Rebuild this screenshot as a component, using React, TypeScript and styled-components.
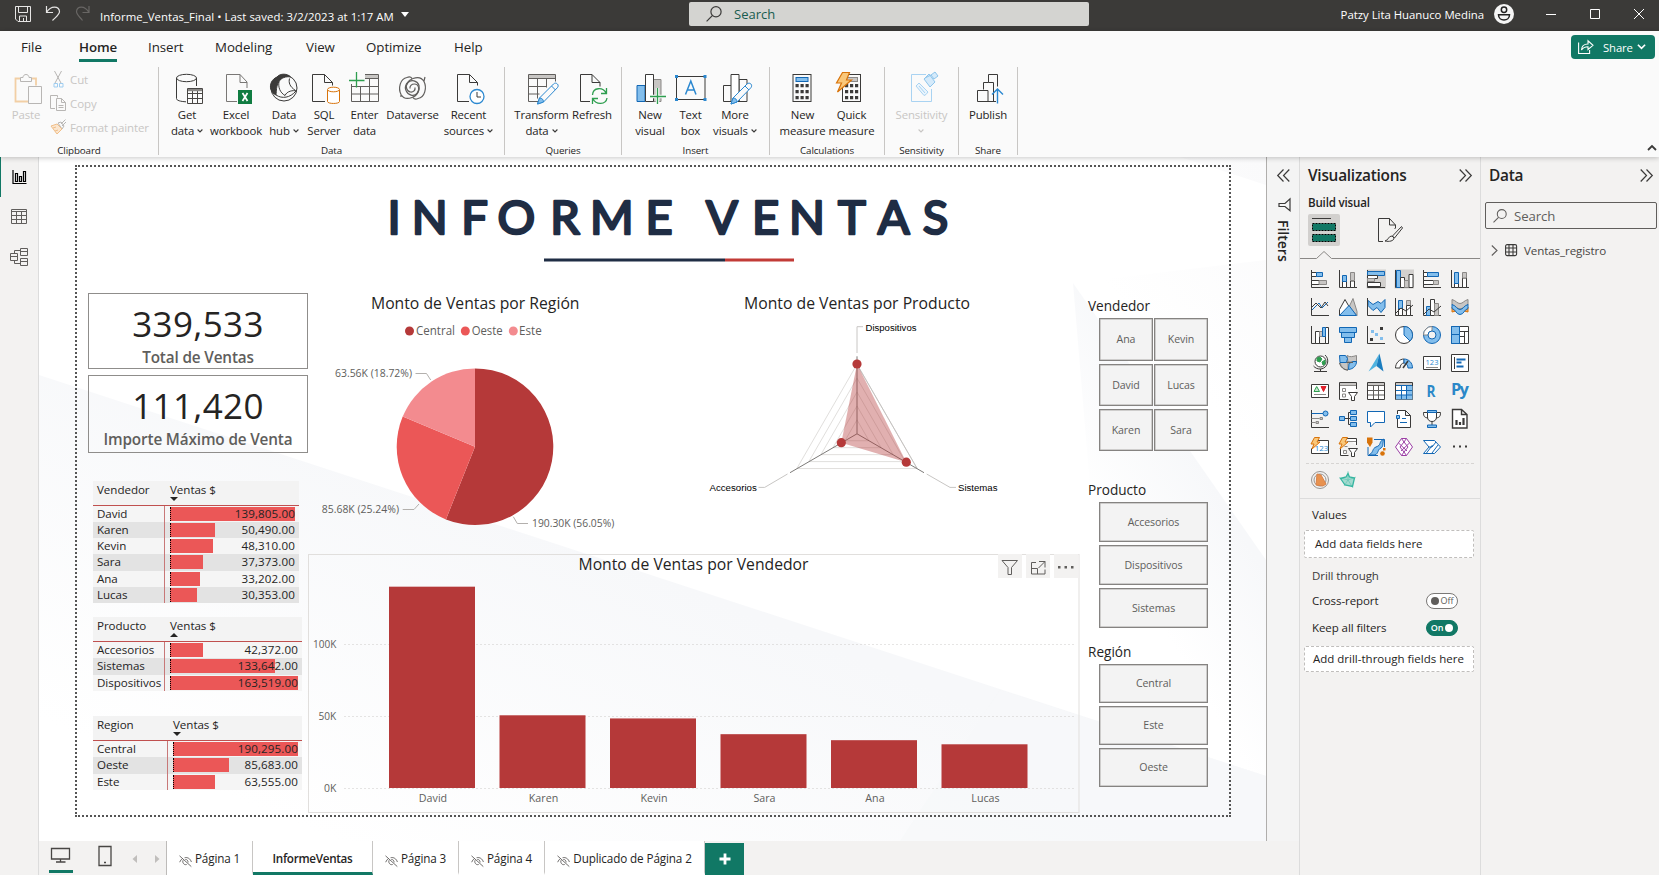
import React from "react";
import styled, { createGlobalStyle } from "styled-components";

const ui = `"Open Sans", "Noto Sans", sans-serif`;
const INK = "#3b3a39";
const GREEN = "#117865";
const BLUE = "#1267b4";
const SKY = "#83beec";
const GREY = "#8a8886";
const SILVER = "#c8c6c4";
const ORANGE = "#d8730a";
const CRIMSON = "#b53939";
const RED = "#eb5757";
const PINK = "#f38b8f";

const Global = createGlobalStyle`
  * { box-sizing: border-box; }
  body { margin: 0; background: #f3f2f1; font-family: ${ui}; color: #252423; }
  svg { display: block; overflow: visible; flex: none; }
  svg text { font-family: ${ui}; }
`;

/* ---------- shell ---------- */
const Shell = styled.div`
  width: 1659px;
  height: 875px;
  display: flex;
  flex-direction: column;
  overflow: hidden;
  white-space: nowrap;
`;
const TitleBar = styled.header`
  height: 31px;
  flex: none;
  display: flex;
  background: #3b3a38;
  color: #fff;
  font-size: 11.4px;
`;
const TitleLeft = styled.div`
  width: 689px;
  display: flex;
  align-items: center;
  padding: 2px 0 0 15px;
`;
const FileName = styled.span`
  margin-left: 10px;
  letter-spacing: 0.04px;
`;
const TopSearch = styled.div`
  width: 400px;
  height: 24px;
  margin-top: 2px;
  padding-left: 17px;
  border-radius: 2px;
  background: #d4d4d1;
  color: #185c4f;
  display: flex;
  align-items: center;
  gap: 12px;
  font-size: 13px;
`;
const TitleRight = styled.div`
  flex: 1;
  display: flex;
  align-items: center;
  justify-content: flex-end;
  padding: 0 15px 3px 0;
`;
const UserName = styled.span`
  margin-right: 10px;
  letter-spacing: -0.03px;
`;

/* ---------- ribbon ---------- */
const Ribbon = styled.div`
  height: 126px;
  flex: none;
  background: #fafafa;
  box-shadow: 0 1px 5px rgba(0, 0, 0, 0.22);
  position: relative;
  z-index: 2;
`;
const TabRow = styled.nav`
  height: 36px;
  display: flex;
  align-items: flex-start;
  padding-left: 21px;
`;
const RibbonTab = styled.span<{ $w: number; $active?: boolean }>`
  width: ${(p) => p.$w}px;
  font-size: 13.3px;
  line-height: 18px;
  padding-top: 7px;
  letter-spacing: -0.05px;
  font-weight: ${(p) => (p.$active ? 600 : 400)};
`;
const TabMark = styled.span<{ $active?: boolean }>`
  display: inline-block;
  padding-bottom: 3px;
  letter-spacing: ${(p) => (p.$active ? "-0.1px" : "inherit")};
  border-bottom: 3px solid ${(p) => (p.$active ? GREEN : "transparent")};
`;
const ShareButton = styled.button`
  width: 84px;
  height: 24px;
  margin: 4px 4px 0 auto;
  padding: 0 8px 0 7px;
  border: 0;
  border-radius: 4px;
  background: ${GREEN};
  color: #fff;
  display: flex;
  align-items: center;
  font: 500 11.3px ${ui};
  letter-spacing: -0.1px;
`;
const ShareText = styled.span`
  margin: 0 4px 0 9px;
`;
const Tools = styled.div`
  display: flex;
  height: 90px;
`;
const Group = styled.section<{ $w: number; $pad?: number }>`
  width: ${(p) => p.$w}px;
  height: 88px;
  padding-left: ${(p) => p.$pad ?? 0}px;
  border-right: 1px solid #c8c6c4;
  display: grid;
  grid-template-rows: 76px 12px;
`;
const GroupName = styled.span<{ $pad: number }>`
  margin-left: ${(p) => -p.$pad}px;
  text-align: center;
  font-size: 9.8px;
  line-height: 16px;
  letter-spacing: -0.1px;
`;
const ToolRow = styled.div`
  display: flex;
`;
const Tool = styled.div<{ $w: number; $muted?: boolean; $heavy?: boolean }>`
  width: ${(p) => p.$w}px;
  padding-top: 5px;
  display: flex;
  flex-direction: column;
  align-items: center;
  font-size: 11.4px;
  line-height: 16px;
  letter-spacing: -0.12px;
  font-weight: ${(p) => (p.$heavy ? 500 : 400)};
  color: ${(p) => (p.$muted ? "#c8c6c4" : "#252423")};
`;
const ToolLabel = styled.span`
  margin-top: 2px;
  display: flex;
  flex-direction: column;
  align-items: center;
`;
const WithChevron = styled.span`
  display: flex;
  align-items: center;
  gap: 3px;
  height: 16px;
`;
const ClipList = styled.div`
  display: flex;
  flex-direction: column;
  margin-left: 7px;
`;
const ClipItem = styled.div`
  height: 24px;
  display: flex;
  align-items: center;
  gap: 3px;
  font-size: 11.5px;
  letter-spacing: -0.1px;
  color: #c8c6c4;
`;
const RibbonFold = styled.div`
  margin: 77px 2px 0 auto;
`;

/* ---------- work area ---------- */
const Work = styled.main`
  flex: 1;
  display: flex;
  min-height: 0;
`;
const Rail = styled.aside`
  width: 39px;
  background: #f3f2f1;
  border-right: 1px solid #dcdcdc;
`;
const RailItem = styled.div<{ $active?: boolean }>`
  height: 40px;
  display: flex;
  align-items: center;
  padding-left: 9px;
  border-left: 1px solid ${(p) => (p.$active ? GREEN : "transparent")};
`;
const Center = styled.div`
  width: 1261px;
  display: flex;
  flex-direction: column;
  border-right: 1px solid #dcdcdc;
`;
const CanvasRow = styled.div`
  height: 684px;
  display: flex;
`;
const Canvas = styled.div`
  width: 1228px;
  height: 684px;
  padding: 8px 0 0 36px;
  background: #fff;
  border-right: 1px solid #b0aeac;
  position: relative;
  overflow: hidden;
`;
const Backdrop = styled.svg`
  position: absolute;
  left: 0;
  top: 0;
`;
const FilterPane = styled.aside`
  flex: 1;
  background: #f4f4f4;
  display: flex;
  flex-direction: column;
  align-items: center;
  padding-top: 12px;
`;
const FilterText = styled.span`
  writing-mode: vertical-rl;
  margin-top: 8px;
  font-size: 14px;
  line-height: 18px;
  font-weight: 600;
`;

/* ---------- report page ---------- */
const Page = styled.div`
  position: relative;
  width: 1156px;
  height: 652px;
  border: 2px dotted #555;
  display: grid;
  grid-template-rows: 114px 1fr;
`;
const PageHead = styled.div`
  padding-left: 301px;
`;
const PageBody = styled.div`
  display: grid;
  grid-template-columns: 231px 772px 149px;
`;
const LeftCol = styled.div`
  padding: 12px 0 0 11px;
`;
const MidCol = styled.div``;
const Pair = styled.div`
  display: flex;
  height: 273px;
`;
const RightCol = styled.div`
  padding: 16px 0 0 8px;
`;
const Kpi = styled.div<{ $h: number }>`
  width: 220px;
  height: ${(p) => p.$h}px;
  margin-bottom: 6px;
  border: 1px solid #8f8d8b;
  border-bottom-width: 1.5px;
  display: flex;
  flex-direction: column;
  align-items: center;
`;
const KpiValue = styled.span`
  font-size: 35px;
  line-height: 40px;
  margin-top: 10px;
  height: 43px;
  letter-spacing: 0.35px;
`;
const KpiName = styled.span`
  font-size: 15.3px;
  line-height: 20px;
  height: 20px;
  font-weight: 600;
  color: #605e5c;
  letter-spacing: -0.15px;
`;
const TableBox = styled.div<{ $w: number; $top: number }>`
  width: ${(p) => p.$w}px;
  margin: ${(p) => p.$top}px 0 0 5px;
  font-size: 11.6px;
  letter-spacing: -0.05px;
`;
const HeadRow = styled.div<{ $split: number }>`
  height: 25px;
  display: grid;
  grid-template-columns: ${(p) => p.$split}px 1fr;
  background: #f3f3f3;
  border-bottom: 1px solid #c0504f;
  padding-left: 4px;
  line-height: 17px;
`;
const HeadCell = styled.div``;
const SortMark = styled.i<{ $up?: boolean }>`
  display: block;
  width: 0;
  margin-top: -1px;
  border: 4px solid transparent;
  ${(p) => (p.$up ? "border-bottom-color: #252423; border-top: 0;" : "border-top-color: #252423; border-bottom: 0;")}
`;
const BodyRow = styled.div<{ $split: number; $odd: boolean }>`
  height: 16.15px;
  display: grid;
  grid-template-columns: ${(p) => p.$split}px 1fr;
  background: ${(p) => (p.$odd ? "#e3e3e3" : "#f5f5f5")};
  line-height: 15.5px;
`;
const NameCell = styled.div`
  padding-left: 4px;
  border-right: 1px solid #c87878;
`;
const ValueCell = styled.div<{ $pr: number }>`
  padding: 1px ${(p) => p.$pr}px 1px 5px;
  display: grid;
`;
const Meter = styled.div`
  grid-area: 1 / 1;
  height: 14px;
  background: ${RED};
  border-left: 1px dotted #000;
`;
const Amount = styled.span`
  grid-area: 1 / 1;
  text-align: right;
  line-height: 13.5px;
  letter-spacing: 0.12px;
  z-index: 1;
`;
const SlicerName = styled.h3`
  margin: 0;
  font-weight: 400;
  font-size: 13.6px;
  height: 21px;
  line-height: 18px;
`;
const Slicer = styled.div<{ $cols: number; $rows: string; $after: number }>`
  width: 109px;
  margin: 0 0 ${(p) => p.$after}px 11px;
  display: grid;
  grid-template-columns: repeat(${(p) => p.$cols}, 1fr);
  grid-template-rows: ${(p) => p.$rows};
  column-gap: 1px;
  row-gap: 3px;
`;
const SlicerButton = styled.div`
  background: #f3f3f3;
  border: 1px solid #858381;
  box-shadow: inset 0 0 0 0.5px #aaa8a6;
  display: flex;
  align-items: center;
  justify-content: center;
  color: #605e5c;
  font-size: 10.6px;
  letter-spacing: -0.1px;
  padding-bottom: 1px;
`;

/* ---------- page tabs ---------- */
const Tabs = styled.footer`
  flex: 1;
  display: flex;
  background: #f3f2f1;
`;
const TabTools = styled.div`
  width: 128px;
  border-right: 1px solid #bdbbb9;
  padding-left: 10px;
`;
const PageTab = styled.div<{ $w: number; $active?: boolean }>`
  width: ${(p) => p.$w}px;
  background: #fff;
  border-right: 1px solid #c8c6c4;
  border-bottom: 3px solid ${(p) => (p.$active ? GREEN : "#fff")};
  display: flex;
  align-items: center;
  justify-content: center;
  gap: 3px;
  padding-top: 3px;
  font-size: 11.7px;
  letter-spacing: ${(p) => (p.$active ? -0.3 : -0.12)}px;
  font-weight: ${(p) => (p.$active ? 600 : 400)};
`;
const AddTab = styled.div`
  width: 39px;
  margin-top: 2px;
  background: ${GREEN};
  display: flex;
  align-items: center;
  justify-content: center;
`;

/* ---------- side panes ---------- */
const VizPane = styled.aside`
  width: 181px;
  background: #f3f2f1;
  border-right: 1px solid #dcdcdc;
`;
const DataPane = styled.aside`
  flex: 1;
  background: #f3f2f1;
`;
const PaneHead = styled.div<{ $pr: number }>`
  height: 38px;
  padding: 0 ${(p) => p.$pr}px 1px 8px;
  display: flex;
  align-items: center;
  justify-content: space-between;
  font-size: 15.4px;
  font-weight: 600;
  letter-spacing: -0.25px;
`;
const BuildText = styled.div`
  height: 19px;
  line-height: 16px;
  padding-left: 8px;
  font-size: 11.6px;
  font-weight: 600;
  letter-spacing: -0.2px;
`;
const ModeRow = styled.div`
  height: 45px;
  padding-left: 8px;
  display: flex;
  gap: 38px;
`;
const ModeBox = styled.div`
  width: 32px;
  height: 32px;
  border-radius: 2px;
  background: #d2d0ce;
`;
const IconGrid = styled.div`
  display: grid;
  grid-template-columns: repeat(6, 18px);
  grid-auto-rows: 18px;
  gap: 10px;
  margin: 11px 6px 0 6px;
  padding: 0 0 7px 5px;
  border-bottom: 1px dashed #d6d4d2;
`;
const CustomRow = styled.div`
  height: 35px;
  padding: 7px 0 0 11px;
  display: flex;
  gap: 10px;
  border-bottom: 1px solid #dcdcdc;
`;
const FieldName = styled.div<{ $h: number; $strong?: boolean }>`
  height: ${(p) => p.$h}px;
  padding: 0 22px 0 12px;
  display: flex;
  align-items: center;
  justify-content: space-between;
  font-size: 11.5px;
  letter-spacing: -0.08px;
  font-weight: ${(p) => (p.$strong ? 500 : 400)};
  color: ${(p) => (p.$strong ? "#3b3a39" : "#252423")};
`;
const DropWell = styled.div<{ $h: number; $pl: number }>`
  height: ${(p) => p.$h}px;
  width: 170px;
  margin-left: 4px;
  padding: 0 0 2px ${(p) => p.$pl}px;
  border: 1px dashed #c0bebc;
  border-radius: 2px;
  background: #fff;
  display: flex;
  align-items: center;
  font-size: 11.5px;
  letter-spacing: 0;
`;
const Toggle = styled.span<{ $on?: boolean }>`
  width: 32px;
  height: 16px;
  border-radius: 8px;
  border: 1px solid ${(p) => (p.$on ? GREEN : "#7a7876")};
  background: ${(p) => (p.$on ? GREEN : "#fff")};
  color: ${(p) => (p.$on ? "#fff" : "#605e5c")};
  display: flex;
  flex-direction: ${(p) => (p.$on ? "row" : "row-reverse")};
  align-items: center;
  justify-content: center;
  gap: 2px;
  font-size: 9px;
  font-weight: ${(p) => (p.$on ? 600 : 400)};
`;
const Knob = styled.i<{ $on?: boolean }>`
  width: 8px;
  height: 8px;
  border-radius: 50%;
  background: ${(p) => (p.$on ? "#fff" : "#605e5c")};
`;
const DataSearch = styled.div`
  width: 172px;
  height: 27px;
  margin: 7px 0 0 4px;
  padding-left: 7px;
  border: 1px solid #605e5c;
  border-radius: 2px;
  display: flex;
  align-items: center;
  gap: 7px;
  font-size: 13.2px;
  color: #605e5c;
  letter-spacing: -0.1px;
`;
const TableRow = styled.div`
  margin-top: 12px;
  height: 18px;
  padding-left: 10px;
  display: flex;
  align-items: center;
  gap: 7px;
  font-size: 11.6px;
  color: #484644;
  letter-spacing: -0.1px;
`;

/* ---------- small glyphs ---------- */
const Chev = ({ c = INK, w = 7 }: { c?: string; w?: number }) => (
  <svg width={w} height={w * 0.6} viewBox="0 0 7 4.2" fill="none" stroke={c} strokeWidth="1.3">
    <path d="M.7 .6 3.5 3.4 6.3 .6" />
  </svg>
);
const Double = ({ left }: { left?: boolean }) => (
  <svg width="13" height="13" viewBox="0 0 13 13" fill="none" stroke={INK} strokeWidth="1.2">
    <path d={left ? "M6.5.5.7 6.5l5.8 6M12.3.5 6.5 6.5l5.8 6" : "M.7.5l5.8 6-5.8 6M6.5.5l5.8 6-5.8 6"} />
  </svg>
);
const Lens = ({ s = 16, c = INK }: { s?: number; c?: string }) => (
  <svg width={s} height={s} viewBox="0 0 16 16" fill="none" stroke={c} strokeWidth="1.2">
    <circle cx="10" cy="5.8" r="5.1" />
    <path d="M6.3 9.6.6 15.4" />
  </svg>
);
const Hidden = () => (
  <svg width="13" height="12" viewBox="0 0 13 12" fill="none" stroke="#605e5c" strokeWidth=".9" style={{ marginTop: 5 }}>
    <path d="M.5.8 12.3 11.6M.7 7.2C1.5 5.4 2.4 4.3 3.7 3.4M5.6 2.7C8.8 2 11.4 3.8 12.4 7M4.1 5.2C3 7.5 5 10.4 7.7 9.5M6.3 4.4C8 4.3 9.3 5.8 9 7.5" />
  </svg>
);

/* ---------- ribbon icons: x is measured from the button centre ---------- */
const Big = ({ children }: { children: React.ReactNode }) => (
  <svg width="32" height="33" viewBox="-16 0 32 33" fill="none" stroke={INK} strokeWidth="1">
    {children}
  </svg>
);
const Pencil = ({ x, y }: { x: number; y: number }) => (
  <g transform={`translate(${x} ${y})`} stroke="#2b88d0" fill="#fafafa">
    <path d="M0 21l2-6L16 1c1.300-1.300 3-1 3.900 0 1 1 1 2.500 0 3.700L6 19z" />
    <path d="M0 21l2-6c2.500 0 4 1.500 4 4z" fill={SKY} />
    <path d="M14 3l4 4" />
  </g>
);
const Calc = ({ x, grey }: { x: number; grey?: boolean }) => (
  <g>
    <rect x={x} y="2.5" width="18" height="27" fill="#fafafa" />
    <rect x={x + 3} y="5.5" width="12" height="4" fill={grey ? SILVER : SKY} stroke={grey ? GREY : BLUE} />
    <path
      stroke="none"
      fill={INK}
      d={[0, 1, 2]
        .flatMap((r) => [0, 1, 2].map((c) => `M${x + 2.5 + c * 5} ${12 + r * 6}h3.200v3.200h-3.200z`))
        .join("")}
    />
  </g>
);
const GetData = () => (
  <Big>
    <path d="M-10.500 6v20.500c0 2 4 3 9.500 3.300M9.500 6v8" />
    <ellipse cx="-.5" cy="6" rx="10" ry="3.700" />
    <path d="M.5 16.500h15v15H.5zM.5 21.500h15M.5 26.500h15M5.500 19v12.500M10.500 19v12.500" stroke="#484644" />
    <path d="M1 17h14v2.200H1z" fill={GREY} stroke="none" />
  </Big>
);
const Excel = () => (
  <Big>
    <path d="M1 29.500h-10.500v-27H4l7 7.500v6M4 2.500v8h7" stroke="#797775" />
    <rect x="2" y="18" width="14" height="14" fill="#107c41" stroke="none" />
    <path d="M6.500 21l5 8M11.500 21l-5 8" stroke="#fff" strokeWidth="1.700" />
  </Big>
);
const Hub = () => (
  <Big>
    <circle cx="0" cy="16" r="13" fill="#fafafa" />
    <path d="M-7 5C-4 1 4 1.500 6.500 5 2 4-3 6-5 9.500c-3 5-2.500 9-3 13.500-5-2-7-8-4.500-13 1-2 3-4 5.500-5z" fill={INK} />
    <path d="M-5 9.500c-1 6 1 11 6 14M5.500 6.500c-1 4 0 8 6 12M12.500 19C9 18 3 19 1 23.500M-8 23c6 4 14 3 20-4" />
  </Big>
);
const Sql = () => (
  <Big>
    <path d="M1 29.500h-12.500v-27H.5l8 8v3M.5 2.500v8h8" />
    <path d="M3.500 18v11.500c0 2.600 12 2.600 12 0V18" stroke={ORANGE} fill="#fff" />
    <ellipse cx="9.500" cy="17.500" rx="6" ry="2.300" stroke={ORANGE} fill="#fff" />
  </Big>
);
const Enter = () => (
  <Big>
    <path d="M0 3h13v3H0z" fill={SILVER} stroke="none" />
    <path d="M0 2.500h13.500v27h-27V12M-13.500 14.500h27M-13.500 22h27M-4.500 14v15.500M4.500 7v22.500M0 6.500h13" stroke="#605e5c" />
    <path d="M-16 8.500h15.500M-8.500 0v15.500" stroke="#2e9e4f" strokeWidth="1.300" />
  </Big>
);
const Verse = () => (
  <Big>
    <g stroke="#605e5c" strokeWidth="1.200">
      <path d="M-6 5.500c-7 1-9 11-6 17 2.500 4.500 7 4.500 11 3 6-2 8-8 7-12-1.500-5-8-6.500-11-3-3 3.500-1.500 9 2.500 9.500 3 .3 5-2 4.500-4.500" />
      <path d="M5 26.500c7-1 9-11 6-17-2.500-4.500-7-4.500-11-3-6 2-9 8-7 12 2 5 8 6.500 11 3 3-3.500 2-9.500-2.500-9.500-3 0-5 2-4.500 4.500M-6 5.500c2-1 4-.5 5 .8M5 26.500c-2 1-4 .5-5-.8M11 9l1-4M-12 23l0 2" />
    </g>
  </Big>
);
const Recent = () => (
  <Big>
    <path d="M0 29.500h-11.500v-27H.5l8 8v3M.5 2.500v8h8" />
    <circle cx="8" cy="24.500" r="7" stroke="#2b88d0" fill="#fff" strokeWidth="1.300" />
    <path d="M8 20v5h4" />
  </Big>
);
const Transform = () => (
  <Big>
    <path d="M-13 3h27v3.500h-27z" fill={SILVER} stroke="none" />
    <path d="M-4 29.500h-9.500v-27h27v7M-13.500 6.500h27M-13.500 14.500h18M-13.500 22h11M-4.500 6.500v20M4.500 6.500v9" stroke="#605e5c" />
    <Pencil x={-4.5} y={11} />
  </Big>
);
const Refresh = () => (
  <Big>
    <path d="M-2 29.500h-9.500v-27H0l8 8v4M0 2.500v8h8" />
    <path stroke="#2e9e4f" strokeWidth="1.300" d="M.5 23C1 15 11 15 14 21M14.500 16v5.500H9M15 26c-1 7-11 7-14 1M.5 32v-5.500H6" />
  </Big>
);
const NewVisual = () => (
  <Big>
    <path d="M2 7.500h9v22H2z" fill={SILVER} stroke={GREY} />
    <path d="M-13 13.500h8v16h-8z" fill={SKY} stroke={BLUE} />
    <path d="M-4.500 2.500h8v27h-8z" fill="#fff" />
    <path d="M0 24.500h16M7.500 16v16" stroke="#fafafa" strokeWidth="3.500" />
    <path d="M0 24.500h16M7.500 16v16" stroke="#2e9e4f" strokeWidth="1.300" />
  </Big>
);
const TextBoxIcon = () => (
  <Big>
    <path d="M-14.500 4.500h28.500v23h-28.500z" />
    <path stroke="none" fill="#2b88d0" d="M-16 3h3v3h-3zM12.500 3h3v3h-3zM-16 26h3v3h-3zM12.500 26h3v3h-3z" />
    <path d="M-5.500 22.500-.2 9 5 22.500M-3.700 18h7" stroke="#2b88d0" strokeWidth="1.500" />
  </Big>
);
const MoreVisuals = () => (
  <Big>
    <path d="M4 7.500h8v22H4zM-11.500 13.500h8v16h-8z" />
    <path d="M-4 2.500h8v27h-8z" fill="#fff" />
    <Pencil x={-4} y={11} />
  </Big>
);
const Bolt = () => (
  <path d="M-9.500.500h7L-5.500 8h5L-14.500 20l4-9h-5z" fill="#f9c77a" stroke={ORANGE} strokeWidth="1.200" />
);
const Sensitivity = () => (
  <Big>
    <path d="M4 2.500h-14.500v27h20V17" stroke="#a9d3f2" />
    <path d="M-6 14l3-3L6 20l-2 2.500-2 1zM-3 14l6 7" stroke="#a9d3f2" fill="#eaf5fd" />
    <path d="M2 7l5-5 6 8-5 5zM9 3l4-3 3 4-4 3zM3 6l6-3" stroke="#8ec5ec" fill="#d5eafa" />
  </Big>
);
const Publish = () => (
  <Big>
    <path d="M-4.500 17.500v-7h5v-8h9v12M.5 10.500h5v19M-10.500 18.500H0v11h-10.500zM0 29.500h8" />
    <path d="M9.500 31.500V17M4 22.500 9.500 17l5.500 5.500" stroke="#2b88d0" strokeWidth="1.400" />
  </Big>
);

/* ---------- visualization gallery ---------- */
const G = ({ children }: { children: React.ReactNode }) => (
  <svg width="18" height="18" viewBox="0 0 18 18" fill="none" stroke={INK} strokeWidth="1">
    {children}
  </svg>
);
const L = <path d="M.5 0v17.500H18" />;
const bl = { fill: SKY, stroke: BLUE };
const gr = { fill: SILVER, stroke: GREY };
const wh = { fill: "#fff", stroke: INK };
const Spark = <path d="M3.500-.5h5L6 4h3L1 11l2-5H0z" fill="#f9c77a" stroke={ORANGE} />;
const FunnelMini = <path d="M9.500 10.500h9l-3 4v4h-3v-4z" fill="#fff" />;

const gallery: React.ReactNode[] = [
  <G>{L}<path {...wh} d="M.5 2.500h5v4h-5zM.5 10.500h8v4h-8z" /><path {...bl} d="M5.500 2.500h6v4h-6z" /><path {...gr} d="M8 10.500h7.500v4H8z" /></G>,
  <G>{L}<path {...wh} d="M3.500 11h4v6.500h-4zM11.500 11h4v6.500h-4z" /><path {...bl} d="M3.500 5.500h4v6h-4z" /><path {...gr} d="M11.500 2.500h4v8h-4z" /></G>,
  <G><path d="M0-.5h19v19H-.5z" fill="#d2d0ce" stroke="none" />{L}<path {...bl} d="M.5 1.500h17v4H.5z" /><path {...wh} d="M.5 5.500h10v3H.5zM.5 12.500h13v4H.5z" /><path {...gr} d="M.5 8.500h7v3h-7z" /></G>,
  <G><path d="M0-.5h19v19H-.5z" fill="#d2d0ce" stroke="none" />{L}<path {...bl} d="M1.500.5h4v17h-4z" /><path {...wh} d="M5.500 7.500h4v10h-4zM14 4.500h4v13h-4z" /><path {...gr} d="M9.500 10.500h4v7h-4z" /></G>,
  <G>{L}<path {...wh} d="M.5 2.500h4v4h-4zM.5 10.500h10v4H.5z" /><path {...bl} d="M4.500 2.500h11v4h-11z" /><path {...gr} d="M10.500 10.500h5v4h-5z" /></G>,
  <G>{L}<path {...wh} d="M3.500 13h4v4.500h-4zM11.500 8h4v9.500h-4z" /><path {...bl} d="M3.500 2.500h4v11h-4z" /><path {...gr} d="M11.500 2.500h4v5.500h-4z" /></G>,

  <G>{L}<path d="M1 12 8 5l3 5 6-6" stroke={BLUE} /><path d="M1 9l4-4 5 5 4-6 3 4" stroke={INK} /></G>,
  <G><path {...gr} d="M10 9l4-8.500 4 13v4z" /><path {...wh} d="M.5 11.500l5.500-10 4 7-6 9H.5z" /><path {...bl} d="M.5 17.500l9.500-10 7.500 10z" /></G>,
  <G><path {...bl} d="M1 2.500l5 4 5-3 3 2 4-4v8l-4 5-4-5-4 3-5-5z" />{L}</G>,
  <G>{L}<path {...wh} d="M3.500 10h4v7.500h-4z" /><path {...bl} d="M3.500 2.500h4v8h-4z" /><path {...gr} d="M11.500 2.500h4v5h-4z" /><path {...wh} d="M11.500 7.500h4v10h-4z" /><path d="M1 15l5-5 5 3 7-6" /></G>,
  <G>{L}<path {...bl} d="M3.500 8.500h4v9h-4z" /><path {...wh} d="M7.500 1.500h4v16h-4z" /><path {...gr} d="M11.500 5.500h4v12h-4z" /><path d="M1 16l5-5 5 3 7-6" /></G>,
  <G><path d="M1 14V9l8 2 8-2v5l-8-2z" fill="#f1a45a" stroke={ORANGE} /><path {...gr} d="M1 1.500c4 1 5 4 8 4s4-3 8-4V7c-4 1-5 4-8 4S5 8 1 7z" /><path {...bl} d="M1 6.500c4 1 5 5 8 5s4-4 8-5v4c-4 1-4 6-8 6s-4-5-8-6z" /></G>,

  <G>{L}<path {...wh} d="M4.500 5.500h4v12h-4zM14.500 1.500h3v16h-3z" /><path {...gr} d="M8.500 5.500h3v5h-3z" /><path {...bl} d="M11.500 1.500h3v9h-3z" /></G>,
  <G><path {...bl} d="M.5 1.500h17v5H.5zM2.500 6.500h13v5h-13zM5.500 11.500h7v5h-7z" /></G>,
  <G>{L}<path fill={INK} stroke="none" d="M13 1h3v3h-3zM3 12h3v3H3z" /><path fill={SKY} stroke="none" d="M4 4h3v3H4zM8 7h3v3H8zM13 11h3v3h-3z" /></G>,
  <G><circle cx="9" cy="9" r="8.500" fill="#fff" /><path {...bl} d="M9 .5a8.500 8.500 0 0 1 6 14.500L9 9z" /></G>,
  <G><circle cx="9" cy="9" r="8.500" {...bl} /><path d="M9 .5A8.500 8.500 0 0 0 .5 9H5a4 4 0 0 1 4-4z" fill="#fff" stroke={GREY} /><circle cx="9" cy="9" r="4" fill="#f3f2f1" stroke={BLUE} /></G>,
  <G><path {...wh} d="M.5.5h17v17H.5zM8.500 5.500h9M13.500 5.500v12M8.500 10.500h5" /><path {...bl} d="M.5.5h8v8h-8zM.5 8.500h8v9h-8z" /></G>,

  <G><circle cx="9.500" cy="7.500" r="5.500" fill="#fff" /><path d="M6 4l3-1 2 2-2 3-3-1zM11 8l3-2v4l-2 1z" fill="#2e9e4f" stroke="#2e9e4f" /><path d="M14 1c5 4 3 13-4 14-3 .3-6-1-7.500-3M9.500 15v2.500M3 17.500h13" /></G>,
  <G><path {...gr} d="M8 1.500c3 2 6 1 9.500 0V8H9zM1 8h8v8c-4 0-7-3-8-8z" /><path {...bl} d="M.5 1.500h6l2 3-1 4H1zM10 9.500l4-2h3.500c0 4-3 7.500-8 8z" /><path d="M.5 9c1 4 4 7 8.500 7M7.500 8.500h6.500" stroke="#605e5c" /></G>,
  <G><path d="M12.500-.5 1.500 17.500 9.500 12z" fill="#4fb3e0" stroke="none" /><path d="M12.500-.5 16.500 17.500 9.500 12z" fill="#1a7dbf" stroke="none" /></G>,
  <G><path d="M.5 14c0-5 4-9 8.500-9v4c-2 0-4 2-4 5z" fill="#fff" /><path {...bl} d="M9 5c5 0 8.500 4 8.500 9h-4.500c0-3-2-5-4-5z" /><path d="M8 14l5-7" strokeWidth="1.500" /></G>,
  <G><path fill="#fff" d="M.5 2.500h17v13H.5z" /><text x="9" y="10.800" fontSize="7.500" fontWeight="500" textAnchor="middle" fill="#2b88d0" stroke="none">123</text><path d="M3 13.500h12" stroke={GREY} /></G>,
  <G><path fill="#fff" d="M.5.500h17v17H.5zM3.500 3v12" /><path d="M5.500 5.500h9M5.500 8.500h5M5.500 12.500h7" stroke={BLUE} strokeWidth="1.800" /></G>,

  <G><path fill="#fff" d="M.5 2.500h17v13H.5z" /><path d="M3 9.500 5.700 4.500 8.500 9.500z" fill="#c9e8d1" stroke="#2e9e4f" /><path d="M10 4.500h5l-2.500 5z" fill="#e0202a" stroke="#e0202a" /><path d="M3 12.500h12" stroke={GREY} /></G>,
  <G><path d="M17.500 7V.5H.5v17h9" fill="#fff" /><path d="M1 1h16v2.500H1z" fill={SILVER} stroke="none" /><path d="M1 3.500h16M3.500 6.500h3v3h-3zM3.500 12h3v3h-3z" stroke={GREY} />{FunnelMini}</G>,
  <G><path fill="#fff" d="M.5.500h17v17H.5z" /><path fill={SILVER} stroke="none" d="M1 1h16v2.500H1z" /><path d="M1 3.500h16M1 8.500h16M1 13h16M6.500 4v13M11.500 4v13" stroke="#605e5c" /></G>,
  <G><path fill="#fff" d="M.5.500h17v17H.5z" /><path fill={SILVER} stroke="none" d="M1 1h16v2.500H1z" /><path fill={SKY} stroke="none" d="M12 4h5.500v13.500H1V13h11z" /><path d="M1 3.500h16M1 8.500h16M1 13h16M6.500 4v13M11.500 4v13" stroke={BLUE} /></G>,
  <G><text x="8" y="15" fontSize="16.500" fontWeight="700" textAnchor="middle" fill="#2b88c8" stroke="none" textLength="9" lengthAdjust="spacingAndGlyphs">R</text></G>,
  <G><text x="9" y="13" fontSize="16.500" fontWeight="700" textAnchor="middle" fill="#2b88c8" stroke="none" textLength="18">Py</text></G>,

  <G>{L}<path d="M.5 3.500H12" stroke={BLUE} /><circle cx="14.500" cy="3.500" r="2.500" {...bl} /><path d="M.5 8.500h8M.5 12.500h4M9 7.500h2.500v2H9zM5 11.500h2.500v2H5z" stroke={GREY} fill={SILVER} /></G>,
  <G><path d="M6 8.500h3.500M11 2.500H9.500v12H11M9.500 8.500H11" /><path {...bl} d="M.5 6.500h5v4h-5zM11.500.5h6v4h-6zM11.500 6.500h6v4h-6zM11.500 12.500h6v4h-6z" /></G>,
  <G><path d="M.5 1.500h17v11H8l-4.500 4.500v-4.500h-3z" fill="#fff" stroke={BLUE} /></G>,
  <G><path d="M2.500 4V.5h8l5 5v12h-13V9M10.500.5v5h5" fill="#fff" /><path {...bl} d="M1.500 5.500h3v3h-3z" /><path d="M7 8.500h4M5 12.500h7" stroke={BLUE} /></G>,
  <G><path d="M4.500 1h9v6c0 3-2 4.500-4.500 4.500S4.500 10 4.500 7zM4.500 2.500h-4c0 4 1 5 4.500 5.500M13.500 2.500h4c0 4-1 5-4.500 5.500M9 11.500v4" fill="#fff" /><path {...bl} d="M4.500.5h9v2h-9zM4.500 15h9v2.500h-9z" /></G>,
  <G><path d="M1.500-.5h9l5.500 5v13.500H1.500zM10.500-.5v5h5.500" fill="#fff" strokeWidth="1.400" /><path d="M5.500 10v5M9 12v3M12.500 8v7" strokeWidth="2.200" /></G>,

  <G><path d="M7 2.500h10.500v13H.5v-5" fill="#fff" /><text x="10.500" y="12.500" fontSize="8" textAnchor="middle" fill="#2b88d0" stroke="none" fontWeight="500">123</text>{Spark}</G>,
  <G><path d="M8 .5h9.500V7M1.500 11v6.500h8" fill="#fff" /><path d="M8 3.500h9M5.500 8.500h3M4.500 12.500h3v3h-3z" stroke={GREY} />{FunnelMini}{Spark}</G>,
  <G><path d="M1 9v8.500h10M7 1.500h10.500V9" stroke={BLUE} /><path d="M17 1C11 4 15 7 9 9c-4 1.500-2 5-7 8h6c4-2 2-5 6-7 3-2 1-5 3-9z" {...bl} /><path d="M0-.5h5.500v5L3 9 0 4.500z" fill={ORANGE} stroke="none" /><circle cx="15.500" cy="15.500" r="2.300" fill={ORANGE} stroke="none" /><path d="M16 10h2.500v2.500H16z" fill={ORANGE} stroke="none" /></G>,
  <G><g stroke="#9b3fa5"><path d="M6.500.5h5l6 8.500-6 8.500h-5L.5 9z" fill="#fff" /><path d="M6.500.5 9 4l2.500-3.500M6.500 17.500 9 14l2.500 3.500M3.500 5l8.500 8M14.500 5 6 13M9 4 5 9l4 5 4-5z" /></g></G>,
  <G><path d="M.5 2.500h11l6 6.500-6 6.500H.5L6 9z" stroke={BLUE} fill="#fff" /><path d="M6 9h3l4-5M3.500 15l6-8M9 15l6-8" stroke={BLUE} /></G>,
  <G><path d="M2 7.500h2v2H2zM8 7.500h2v2H8zM14 7.500h2v2h-2z" fill={INK} stroke="none" /></G>,
];

/* ---------- data ---------- */
type Row = [string, number];
const byVendor: Row[] = [["David", 139805], ["Karen", 50490], ["Kevin", 48310], ["Sara", 37373], ["Ana", 33202], ["Lucas", 30353]];
const byProduct: Row[] = [["Accesorios", 42372], ["Sistemas", 133642], ["Dispositivos", 163519]];
const byRegion: Row[] = [["Central", 190295], ["Oeste", 85683], ["Este", 63555]];
const money = (n: number) => n.toLocaleString("en-US", { minimumFractionDigits: 2 });

function SalesTable(p: { title: string; rows: Row[]; width: number; top: number; split: number; pr: number; up?: boolean }) {
  const max = Math.max(...p.rows.map((r) => r[1]));
  return (
    <TableBox $w={p.width} $top={p.top}>
      <HeadRow $split={p.split + 1}>
        <HeadCell>{p.title}</HeadCell>
        <HeadCell>
          Ventas $
          <SortMark $up={p.up} />
        </HeadCell>
      </HeadRow>
      {p.rows.map(([name, value], i) => (
        <BodyRow key={name} $split={p.split} $odd={i % 2 === 1}>
          <NameCell>{name}</NameCell>
          <ValueCell $pr={p.pr}>
            <Meter style={{ width: `${(value / max) * 100}%` }} />
            <Amount>{money(value)}</Amount>
          </ValueCell>
        </BodyRow>
      ))}
    </TableBox>
  );
}

const ChartTitle = ({ x, y, w, children }: { x: number; y: number; w: number; children: string }) => (
  <text x={x} y={y} fontSize="15.5" fontWeight="500" fill="#252423" textLength={w} lengthAdjust="spacingAndGlyphs">{children}</text>
);

const at = (deg: number, r = 78.3) => {
  const a = (deg * Math.PI) / 180;
  return `${475 + r * Math.sin(a)} ${446.7 - r * Math.cos(a)}`;
};
const wedge = (a: number, b: number) => `M475 446.700L${at(a)}A78.300 78.300 0 ${b - a > 180 ? 1 : 0} 1 ${at(b)}Z`;

function PieVisual() {
  const legend: [string, string, number, number, number][] = [
    ["Central", CRIMSON, 409.5, 416, 39],
    ["Oeste", RED, 465.3, 471.7, 31],
    ["Este", PINK, 513.3, 519, 22.7],
  ];
  return (
    <svg width="360" height="272" viewBox="308 281 360 272">
      <ChartTitle x={371} y={309} w={208.5}>Monto de Ventas por Región</ChartTitle>
      {legend.map(([n, c, cx, tx, w]) => (
        <g key={n}>
          <circle cx={cx} cy="331" r="4.500" fill={c} />
          <text x={tx} y="335" fontSize="11.800" fill="#605e5c" textLength={w} lengthAdjust="spacingAndGlyphs">{n}</text>
        </g>
      ))}
      <path d={wedge(0, 201.8)} fill={CRIMSON} />
      <path d={wedge(201.8, 292.6)} fill={RED} />
      <path d={wedge(292.6, 360)} fill={PINK} />
      <g fill="none" stroke="#b3b0ad">
        <path d="M415.500 373.500h11l4.200 6.500M402.700 509.500h11.300l5-5.500M513.300 516.700l4 6.800H528" />
      </g>
      <g fontSize="10.800" fill="#605e5c">
        <text x="335" y="377" textLength="77" lengthAdjust="spacingAndGlyphs">63.56K (18.72%)</text>
        <text x="321.700" y="513" textLength="77.300" lengthAdjust="spacingAndGlyphs">85.68K (25.24%)</text>
        <text x="532" y="527" textLength="82.300" lengthAdjust="spacingAndGlyphs">190.30K (56.05%)</text>
      </g>
    </svg>
  );
}

function RadarVisual() {
  const cx = 857, cy = 433.8, sx = Math.sqrt(3) / 2;
  const arial = { fontFamily: `"Liberation Sans", Arial, sans-serif`, fontSize: 9.6 };
  return (
    <svg width="412" height="272" viewBox="668 281 412 272">
      <ChartTitle x={744} y={309} w={226}>Monto de Ventas por Producto</ChartTitle>
      {[1, 2, 3, 4, 5].map((i) => {
        const r = i * 13.9;
        return (
          <path
            key={i}
            d={`M${cx} ${cy - r}L${cx + r * sx} ${cy + r / 2}H${cx - r * sx}Z`}
            fill="none"
            stroke="#e1dfdd"
          />
        );
      })}
      <path d={`M${cx} ${cy - 69.5}L917.200 468.600`} stroke="#c4c2c0" />
      <path d={`M${cx} 356.300V${cy}L924 472.700M${cx} ${cy}L790 472.700`} fill="none" stroke="#7d7b79" />
      <path d="M857 364L906.300 462.200 841.300 442.700Z" fill={CRIMSON} opacity=".4" />
      <g fill={CRIMSON}>
        <circle cx="857" cy="364" r="4.600" />
        <circle cx="906.300" cy="462.200" r="4.600" />
        <circle cx="841.300" cy="442.700" r="4.600" />
      </g>
      <path d="M857 353V326.700h6M926.700 474l23.300 13.400h6M787.500 474l-22.800 13.400h-6.200" fill="none" stroke="#c8c6c4" />
      <g fill="#000">
        <text x="865.500" y="331" textLength="51" lengthAdjust="spacingAndGlyphs" style={arial}>Dispositivos</text>
        <text x="958" y="491" textLength="39.500" lengthAdjust="spacingAndGlyphs" style={arial}>Sistemas</text>
        <text x="709.500" y="491" textLength="47.300" lengthAdjust="spacingAndGlyphs" style={arial}>Accesorios</text>
      </g>
    </svg>
  );
}

function BarVisual() {
  return (
    <svg width="772" height="260" viewBox="308 554 772 260">
      <rect x="308.500" y="554.500" width="770.500" height="258" fill="none" stroke="#e1dfdd" />
      <path d="M998 554h24v24h-24zM1026 554h24v24h-24zM1054 554h24.500v24H1054z" fill="#f3f2f1" />
      <g fill="none" stroke="#605e5c">
        <path d="M1002 560.500h15.500l-6 7v7h-3.500v-7z" />
        <path d="M1036 562.500h-4.500v11.500h13.500v-4.500M1031.500 568.500h6v5.500M1039 561.500h6v6M1045 561.500l-6.500 6.500" />
      </g>
      <path d="M1058 566h2.500v2.500h-2.500zM1064.500 566h2.500v2.500h-2.500zM1071 566h2.500v2.500H1071z" fill="#605e5c" />
      <ChartTitle x={578.5} y={570} w={230}>Monto de Ventas por Vendedor</ChartTitle>
      {[[644.5, "100K", 313, 23.3], [716.5, "50K", 318.5, 17.7], [788.5, "0K", 324, 12.3]].map(([y, t, x, w]) => (
        <g key={t as string}>
          <path d={`M344.500 ${y}H1076`} stroke="#cccac8" strokeDasharray="1 3" />
          <text x={x} y={(y as number) + 3.5} fontSize="10.500" fill="#605e5c" textLength={w} lengthAdjust="spacingAndGlyphs">{t}</text>
        </g>
      ))}
      {byVendor.map(([n, v], i) => {
        const h = v * 0.00144;
        const x = 389 + i * 110.5;
        return (
          <g key={n}>
            <rect x={x} y={788 - h} width="86" height={h} fill={CRIMSON} />
            <text x={x + 44} y="802" fontSize="10.700" fill="#605e5c" textAnchor="middle">{n}</text>
          </g>
        );
      })}
    </svg>
  );
}

const letters: [string, number][] = [
  ["I", 394.2], ["N", 429.8], ["F", 474.5], ["O", 516.2], ["R", 565], ["M", 611.7], ["E", 659],
  ["V", 722], ["E", 765.5], ["N", 807], ["T", 852], ["A", 893.7], ["S", 935.5],
];

function Headline() {
  return (
    <svg width="580" height="100" viewBox="378 167 580 100">
      <text
        x={[...letters.slice(0, 7).map((l) => l[1]), 688, ...letters.slice(7).map((l) => l[1])].join(" ")}
        y="234.300"
        textAnchor="middle"
        style={{ fontFamily: "Lato, sans-serif", fontSize: 47 }}
        fill="#1f2d44"
        stroke="#1f2d44"
        strokeWidth="2.500"
        strokeLinejoin="round"
      >
        INFORME VENTAS
      </text>
      <path d="M544 260h181" stroke="#1f2d44" strokeWidth="3" />
      <path d="M725 260h69" stroke="#c23b36" strokeWidth="3" />
    </svg>
  );
}

function Background() {
  return (
    <Backdrop width="1227" height="684" viewBox="39 157 1227 684">
      <defs>
        <linearGradient id="sweep" gradientUnits="userSpaceOnUse" x1="620" y1="560" x2="480" y2="900">
          <stop offset="0" stopColor="#f7f8fa" />
          <stop offset="1" stopColor="#ffffff" />
        </linearGradient>
        <linearGradient id="blade" gradientUnits="userSpaceOnUse" x1="1210" y1="480" x2="1110" y2="540">
          <stop offset="0" stopColor="#f7f8fa" />
          <stop offset="1" stopColor="#ffffff" />
        </linearGradient>
        <linearGradient id="corner" gradientUnits="userSpaceOnUse" x1="1266" y1="170" x2="1120" y2="300">
          <stop offset="0" stopColor="#fafafb" />
          <stop offset="1" stopColor="#ffffff" />
        </linearGradient>
      </defs>
      <path d="M1180 157L1266 185V560L1073 283L1266 260V157Z" fill="url(#corner)" />
      <path d="M1073 283L1266 560V776L1110 725Z" fill="url(#blade)" />
      <path d="M39 375L1266 776V841H39Z" fill="url(#sweep)" />
      <path d="M1000 690L1266 776V841H900Z" fill="#f7f8fa" opacity=".7" />
    </Backdrop>
  );
}

function SlicerBlock(p: { name: string; items: string[]; cols?: number; rows: string; after: number }) {
  return (
    <>
      <SlicerName>{p.name}</SlicerName>
      <Slicer $cols={p.cols ?? 1} $rows={p.rows} $after={p.after}>
        {p.items.map((t) => <SlicerButton key={t}>{t}</SlicerButton>)}
      </Slicer>
    </>
  );
}

function T(p: { w: number; icon: React.ReactNode; a: string; b?: string; more?: boolean; muted?: boolean }) {
  return (
    <Tool $w={p.w} $muted={p.muted} $heavy={p.muted}>
      {p.icon}
      <ToolLabel>
        <span>{p.a}</span>
        {(p.b || p.more) && (
          <WithChevron>
            {p.b}
            {p.more && <Chev w={6} c={p.muted ? "#c8c6c4" : INK} />}
          </WithChevron>
        )}
      </ToolLabel>
    </Tool>
  );
}

function RibbonGroup(p: { w: number; pad: number; name: string; children: React.ReactNode }) {
  return (
    <Group $w={p.w} $pad={p.pad}>
      <ToolRow>{p.children}</ToolRow>
      <GroupName $pad={p.pad}>{p.name}</GroupName>
    </Group>
  );
}

export default function App() {
  return (
    <Shell>
      <Global />
      <TitleBar>
        <TitleLeft>
          <svg width="75" height="17" viewBox="0 0 75 17" fill="none" stroke="#e6e5e4" style={{ marginTop: -4 }}>
            <path d="M.5.500h15v15H3l-2.500-2.500zM3.500.5v6h9v-6M4.500 15v-5h7v5M8.500 12v3" />
            <path d="M31.500 0v6.500H38M31.500 6.500C36-1 44 0 44.500 5.500c0 3-3 5-7 9" strokeWidth="1.200" />
            <path d="M74 0v6.500h-6.500M74 6.500C69.500-1 62 0 61.500 5.500c0 3 3 5 6 9" stroke="#686664" strokeWidth="1.200" />
          </svg>
          <FileName>Informe_Ventas_Final • Last saved: 3/2/2023 at 1:17 AM</FileName>
          <svg width="8" height="5" viewBox="0 0 8 5" style={{ margin: "-4px 0 0 7px" }}><path d="M0 0h8L4 5z" fill="#fff" /></svg>
        </TitleLeft>
        <TopSearch><Lens s={16} /><span>Search</span></TopSearch>
        <TitleRight>
          <UserName>Patzy Lita Huanuco Medina</UserName>
          <svg width="20" height="20" viewBox="0 0 20 20">
            <circle cx="10" cy="10" r="10" fill="#f5f5f5" />
            <circle cx="10" cy="5.800" r="2.700" fill="none" stroke="#222" strokeWidth="1.500" />
            <path d="M4.500 10.700h11c0 7-11 7-11 0z" fill="none" stroke="#222" strokeWidth="1.500" />
          </svg>
          <svg width="98" height="10" viewBox="0 0 98 10" fill="none" stroke="#fff" style={{ marginLeft: 32 }}>
            <path d="M0 5.500h10M44.500.5h9v9h-9zM88 0l10 10M98 0 88 10" />
          </svg>
        </TitleRight>
      </TitleBar>

      <Ribbon>
        <TabRow>
          <RibbonTab $w={58}><TabMark>File</TabMark></RibbonTab>
          <RibbonTab $w={69} $active><TabMark $active>Home</TabMark></RibbonTab>
          <RibbonTab $w={67}><TabMark>Insert</TabMark></RibbonTab>
          <RibbonTab $w={91}><TabMark>Modeling</TabMark></RibbonTab>
          <RibbonTab $w={60}><TabMark>View</TabMark></RibbonTab>
          <RibbonTab $w={88}><TabMark>Optimize</TabMark></RibbonTab>
          <RibbonTab $w={60}><TabMark>Help</TabMark></RibbonTab>
          <ShareButton>
            <svg width="16" height="14" viewBox="0 0 16 14" fill="none" stroke="#fff" strokeWidth="1.100">
              <path d="M.6 2.500v11h11V10M3.500 10C3.700 6 6 4 10 4V.8l5 4.500-5 4.200V6.700C7 6.700 5 7.500 3.500 10z" />
            </svg>
            <ShareText>Share</ShareText>
            <Chev c="#fff" w={9} />
          </ShareButton>
        </TabRow>
        <Tools>
          <RibbonGroup w={159} pad={10} name="Clipboard">
            <Tool $w={32} $muted $heavy>
              <svg width="32" height="33" viewBox="0 0 32 33" fill="none">
                <path d="M21 29.500H5.500V6.500H10M22 6.500h4v7" stroke="#f2cfa5" strokeWidth="1.800" />
                <path d="M10.500 9.500v-4H13c0-4 6-4 6 0h2.500v4zM18.500 14.500h13v17h-13z" stroke="#b8b6b4" fill="#fafafa" />
              </svg>
              <ToolLabel>Paste</ToolLabel>
            </Tool>
            <ClipList>
              <ClipItem>
                <svg width="18" height="17" viewBox="0 0 18 17" fill="none" stroke="#b8b6b4">
                  <path d="M5.500 0 12 12M12.500 0 6 12" />
                  <path d="M5 12.500h3.500v3.500H5zM10.500 12.500H14v3.500h-3.500z" stroke="#9fcdf0" />
                </svg>
                Cut
              </ClipItem>
              <ClipItem>
                <svg width="18" height="16" viewBox="0 0 18 16" fill="none" stroke="#b8b6b4">
                  <path d="M6 13.500H1.500V.5h7v2M7.500 3.500h5l4 4v8h-9zM12.500 3.500v4h4M9.500 10.500h5M9.500 12.500h5" />
                </svg>
                Copy
              </ClipItem>
              <ClipItem>
                <svg width="18" height="16" viewBox="0 0 18 16" fill="none" stroke="#b8b6b4">
                  <path d="M8 5l5 5M16.500.5 12 5M17 3l-4 4M9 4l3-1 3 4-2 3z" />
                  <path d="M8 5 2 7l6 8 5-5zM4 9l3-1M6 12l3-1" stroke="#f0bf8a" fill="#fbe6cf" />
                </svg>
                Format painter
              </ClipItem>
            </ClipList>
          </RibbonGroup>
          <RibbonGroup w={346} pad={4} name="Data">
            <T w={48} icon={<GetData />} a="Get" b="data" more />
            <T w={50} icon={<Excel />} a="Excel" b="workbook" />
            <T w={46} icon={<Hub />} a="Data" b="hub" more />
            <T w={34} icon={<Sql />} a="SQL" b="Server" />
            <T w={47} icon={<Enter />} a="Enter" b="data" />
            <T w={49} icon={<Verse />} a="Dataverse" />
            <T w={63} icon={<Recent />} a="Recent" b="sources" more />
          </RibbonGroup>
          <RibbonGroup w={117} pad={6} name="Queries">
            <T w={61} icon={<Transform />} a="Transform" b="data" more />
            <T w={40} icon={<Refresh />} a="Refresh" />
          </RibbonGroup>
          <RibbonGroup w={148} pad={8} name="Insert">
            <T w={40} icon={<NewVisual />} a="New" b="visual" />
            <T w={41} icon={<TextBoxIcon />} a="Text" b="box" />
            <T w={48} icon={<MoreVisuals />} a="More" b="visuals" more />
          </RibbonGroup>
          <RibbonGroup w={115} pad={9} name="Calculations">
            <T w={47} icon={<Big><Calc x={-10} /></Big>} a="New" b="measure" />
            <T w={51} icon={<Big><Calc x={-9.5} grey /><Bolt /></Big>} a="Quick" b="measure" />
          </RibbonGroup>
          <RibbonGroup w={74} pad={0} name="Sensitivity">
            <T w={73} icon={<Sensitivity />} a="Sensitivity" more muted />
          </RibbonGroup>
          <RibbonGroup w={59} pad={0} name="Share">
            <T w={58} icon={<Publish />} a="Publish" />
          </RibbonGroup>
          <RibbonFold>
            <svg width="10" height="7" viewBox="0 0 10 7" fill="none" stroke={INK} strokeWidth="1.800"><path d="M1 6l4-4 4 4" /></svg>
          </RibbonFold>
        </Tools>
      </Ribbon>

      <Work>
        <Rail>
          <RailItem $active>
            <svg width="18" height="18" viewBox="0 0 18 18" fill="none" stroke="#000" strokeWidth="1">
              <path d="M3 2v13.500H16.500M5.500 5.500h2v8h-2zM9.500 8.500h2v5h-2zM13.500 3.500h2v10h-2z" strokeWidth="1.200" />
            </svg>
          </RailItem>
          <RailItem>
            <svg width="18" height="18" viewBox="0 0 18 18" fill="none" stroke="#605e5c">
              <path d="M1.500 1.500h15v14h-15zM1.500 3.500h15M1.500 7.500h15M1.500 11.500h15M6.500 3.500v12M11.500 3.500v12" />
            </svg>
          </RailItem>
          <RailItem>
            <svg width="19" height="18" viewBox="0 0 19 18" fill="none" stroke="#605e5c">
              <path d="M10.500.5h7v7h-7zM10.500 3.500h7M10.500 10.500h7v7h-7zM10.500 13.500h7M.5 5.500h7v7h-7zM.5 8.500h7M10.500 2.500h-6v3M10.500 15.500h-6v-3" />
            </svg>
          </RailItem>
        </Rail>

        <Center>
          <CanvasRow>
            <Canvas>
              <Background />
              <Page>
                <PageHead><Headline /></PageHead>
                <PageBody>
                  <LeftCol>
                    <Kpi $h={76}><KpiValue>339,533</KpiValue><KpiName>Total de Ventas</KpiName></Kpi>
                    <Kpi $h={78}><KpiValue>111,420</KpiValue><KpiName>Importe Máximo de Venta</KpiName></Kpi>
                    <SalesTable title="Vendedor" rows={byVendor} width={206} top={28} split={72} pr={4} />
                    <SalesTable title="Producto" rows={byProduct} width={209} top={14.5} split={72} pr={4} up />
                    <SalesTable title="Region" rows={byRegion} width={209} top={25.5} split={75} pr={4} />
                  </LeftCol>
                  <MidCol>
                    <Pair><PieVisual /><RadarVisual /></Pair>
                    <BarVisual />
                  </MidCol>
                  <RightCol>
                    <SlicerBlock name="Vendedor" cols={2} rows="43px 42px 42px" after={30} items={["Ana", "Kevin", "David", "Lucas", "Karen", "Sara"]} />
                    <SlicerBlock name="Producto" rows="40px 40px 40px" after={15} items={["Accesorios", "Dispositivos", "Sistemas"]} />
                    <SlicerBlock name="Región" rows="39px 39px 39px" after={0} items={["Central", "Este", "Oeste"]} />
                  </RightCol>
                </PageBody>
              </Page>
            </Canvas>
            <FilterPane>
              <Double left />
              <svg width="13" height="14" viewBox="0 0 13 14" fill="none" stroke={INK} strokeWidth="1.200" style={{ margin: "16px 0 0 2px" }}>
                <path d="M12 .8v12L7 8.500H1v-3h6z" />
              </svg>
              <FilterText>Filters</FilterText>
            </FilterPane>
          </CanvasRow>
          <Tabs>
            <TabTools>
              <svg width="117" height="34" viewBox="49 841 117 34" fill="none" stroke="#484644">
                <path d="M51.500 848.500h18v10.500h-18zM60.500 859v3M56 862h9.500" strokeWidth="1.300" />
                <path d="M99 846.500h12v19H99zM104 862.500h2" strokeWidth="1.300" />
                <path d="M49 870h24v3H49z" fill={GREEN} stroke="none" />
                <path d="M137 855v8l-4.500-4zM155 855v8l4.500-4z" fill="#c0bebc" stroke="none" />
              </svg>
            </TabTools>
            <PageTab $w={86}><Hidden />Página 1</PageTab>
            <PageTab $w={120} $active>InformeVentas</PageTab>
            <PageTab $w={86}><Hidden />Página 3</PageTab>
            <PageTab $w={86}><Hidden />Página 4</PageTab>
            <PageTab $w={160}><Hidden />Duplicado de Página 2</PageTab>
            <AddTab>
              <svg width="12" height="12" viewBox="0 0 12 12" stroke="#fff" strokeWidth="2.800"><path d="M6 .5v11M.5 6h11" /></svg>
            </AddTab>
          </Tabs>
        </Center>

        <VizPane>
          <PaneHead $pr={8}>Visualizations<Double /></PaneHead>
          <BuildText>Build visual</BuildText>
          <ModeRow>
            <ModeBox>
              <svg width="32" height="32" viewBox="0 0 32 32">
                <path d="M4 4.500h19" stroke={INK} />
                <path d="M4.500 9.500h23v7h-23zM4.500 20.500h23v7h-23z" fill={GREEN} stroke="#000" strokeDasharray="2 1" />
              </svg>
            </ModeBox>
            <svg width="26" height="32" viewBox="0 0 26 32" fill="none" stroke={INK}>
              <path d="M17 15v-1M5 27.500H.5v-23h11l6 6.500v3M11.500 4.500V11h6" />
              <path d="M23.500 12.500l-9 9.500 2 2 8-10zM14 22c-4 0-3 4-7 5 4 1 9 0 9-3z" fill="#f3f2f1" />
            </svg>
          </ModeRow>
          <svg width="180" height="8" viewBox="0 0 180 8" fill="none" stroke="#8a8886" style={{ marginTop: -8 }}>
            <path d="M0 7.500h16.500l7.500-7 7.500 7H180" />
          </svg>
          <IconGrid>{gallery.map((icon, i) => <React.Fragment key={i}>{icon}</React.Fragment>)}</IconGrid>
          <CustomRow>
            <svg width="18" height="18" viewBox="0 0 18 18" fill="none" stroke="#979593">
              <circle cx="9" cy="9" r="8.500" /><circle cx="9" cy="9" r="6" />
              <path d="M6 3l4 1 5 9-3 2-7-1z" fill="#e8924f" stroke="#d8834a" />
            </svg>
            <svg width="18" height="18" viewBox="0 0 18 18" fill="none" stroke="#35b5a0">
              <path d="M9 2.500 10.500 6l5 1-2 8.500L6 14 1.500 7.500 7 6z" fill="#a3dacf" strokeWidth="1.300" />
              <path d="M9 0v9l8-3M9 9l5 8M9 9l-4 6M9 9 0 6.500" strokeWidth=".4" />
            </svg>
          </CustomRow>
          <FieldName $h={31}>Values</FieldName>
          <DropWell $h={28} $pl={10}>Add data fields here</DropWell>
          <FieldName $h={34} $strong>Drill through</FieldName>
          <FieldName $h={17}>Cross-report<Toggle>Off<Knob /></Toggle></FieldName>
          <FieldName $h={37}>Keep all filters<Toggle $on>On<Knob $on /></Toggle></FieldName>
          <DropWell $h={26} $pl={8}>Add drill-through fields here</DropWell>
        </VizPane>

        <DataPane>
          <PaneHead $pr={6}>Data<Double /></PaneHead>
          <DataSearch><Lens s={14} c="#605e5c" />Search</DataSearch>
          <TableRow>
            <svg width="7" height="11" viewBox="0 0 7 11" fill="none" stroke="#605e5c" strokeWidth="1.100"><path d="M.8.500 6 5.500.8 10.500" /></svg>
            <svg width="12" height="12" viewBox="0 0 12 12" fill="none" stroke={INK} strokeWidth="1.100"><rect x=".6" y=".6" width="11" height="11" rx="1.500" /><path d="M.5 4h11M.5 8h11M4 .5v11M8 .5v11" /></svg>
            Ventas_registro
          </TableRow>
        </DataPane>
      </Work>
    </Shell>
  );
}
